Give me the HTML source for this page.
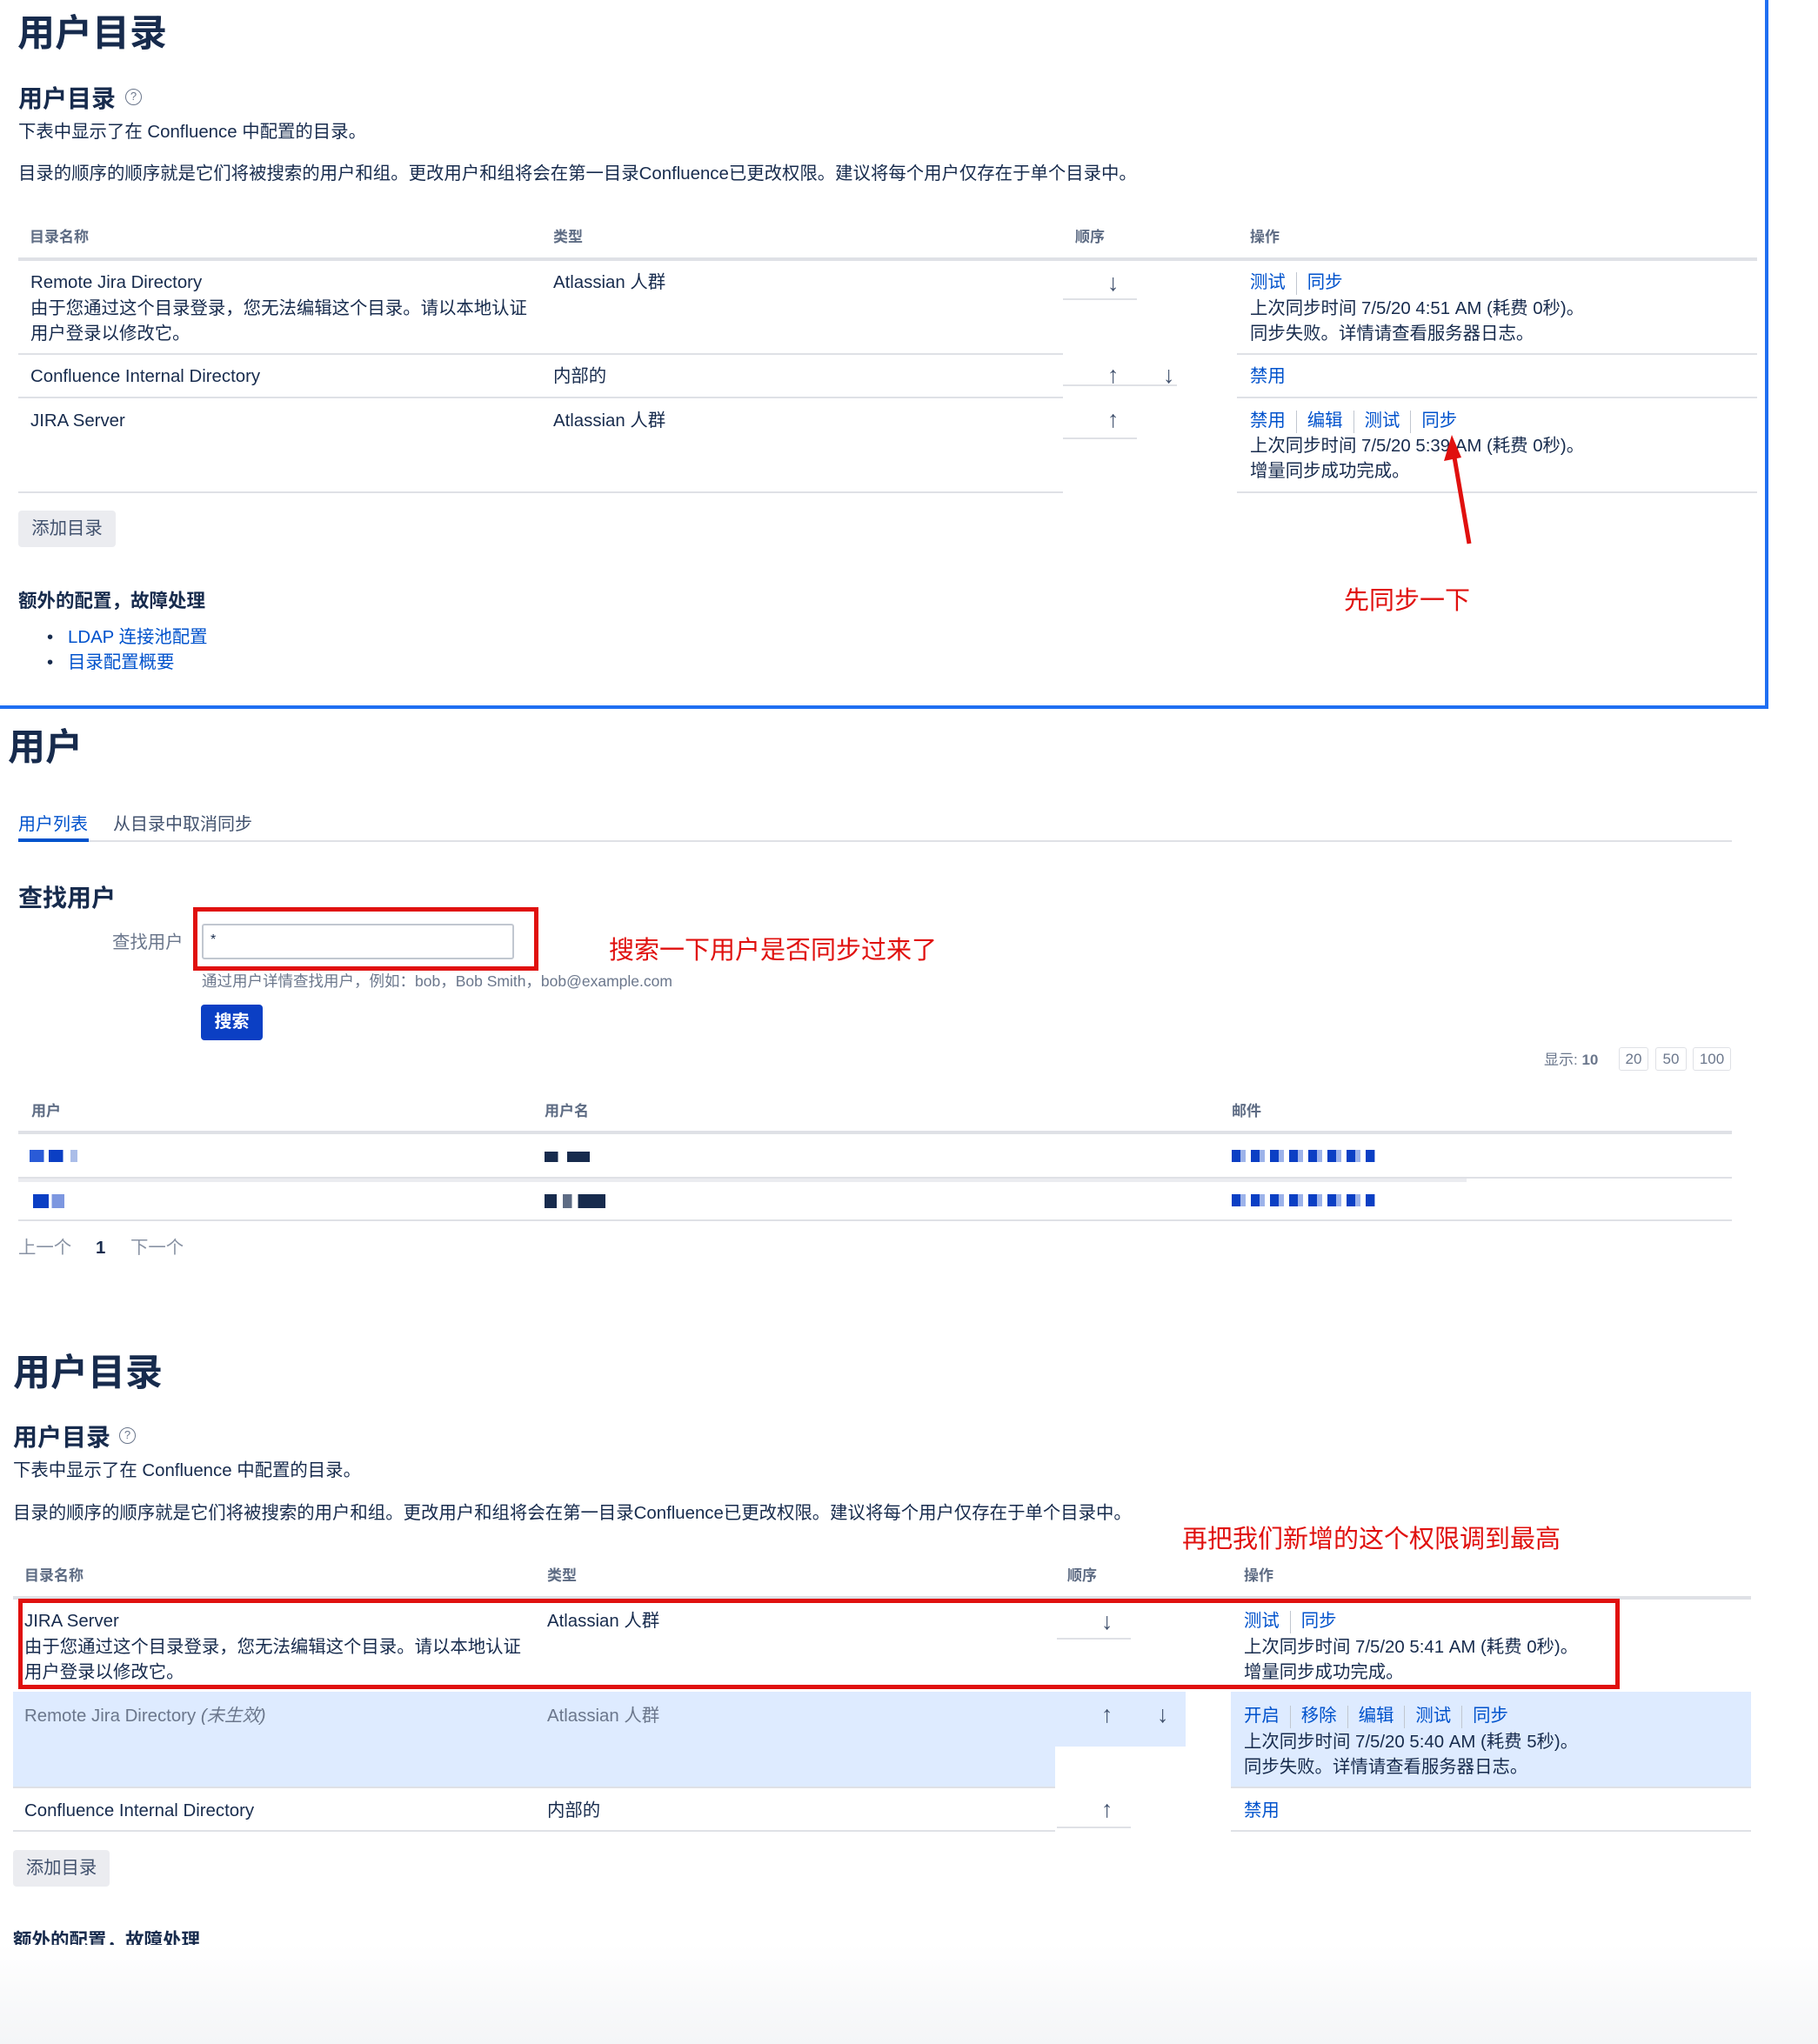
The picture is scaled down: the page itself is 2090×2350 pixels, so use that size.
<!DOCTYPE html>
<html><head><meta charset="utf-8"><style>
*{margin:0;padding:0;box-sizing:border-box}
body{width:2090px;height:2350px;position:relative;overflow:hidden;background:#fff;font-family:"Liberation Sans","Noto Sans CJK SC",sans-serif;color:#172b4d}
.t{position:absolute;white-space:nowrap;font-size:20.4px;line-height:30px;transform:translateY(2px)}
.h1{font-size:43px;font-weight:bold;line-height:60px}
.h2{font-size:28px;font-weight:bold;line-height:40px}
.th{font-size:17px;font-weight:bold;color:#5e6c84}
.a{color:#0052cc}
.g{color:#6b778c}
.red{color:#e0100e;font-size:29px;line-height:40px}
.l{position:absolute;background:#dfe1e6;height:2px}
.lt{position:absolute;background:#dfe1e6;height:4px}
.sep{display:inline-block;width:1px;height:26px;background:#c1c7d0;vertical-align:middle;margin:0 12px}
.btn{position:absolute;background:#ebecf0;border-radius:4px;font-size:20.4px;line-height:42px;text-align:center;color:#42526e}
.arr{position:absolute;font-size:27px;line-height:30px;color:#42526e;font-weight:bold;transform:translateY(2px)}
.q{position:absolute;width:19px;height:19px;border:1.5px solid #6b778c;border-radius:50%;font-size:13px;line-height:16px;text-align:center;color:#6b778c}
.rb{position:absolute;border:5px solid #e0100e}
.blk{position:absolute}
</style></head><body>

<!-- Section 1 -->
<div class="t h1" style="left:20px;top:7px">用户目录</div>
<div class="t h2" style="left:21px;top:92px">用户目录</div>
<div class="q" style="left:144px;top:102px">?</div>
<div class="t" style="left:21px;top:135px">下表中显示了在 Confluence 中配置的目录。</div>
<div class="t" style="left:21px;top:183px">目录的顺序的顺序就是它们将被搜索的用户和组。更改用户和组将会在第一目录Confluence已更改权限。建议将每个用户仅存在于单个目录中。</div>

<div class="t th" style="left:34px;top:256px">目录名称</div>
<div class="t th" style="left:636px;top:256px">类型</div>
<div class="t th" style="left:1236px;top:256px">顺序</div>
<div class="t th" style="left:1437px;top:256px">操作</div>
<div class="lt" style="left:21px;top:296px;width:1999px"></div>

<div class="t" style="left:35px;top:308px">Remote Jira Directory</div>
<div class="t" style="left:35px;top:338px">由于您通过这个目录登录，您无法编辑这个目录。请以本地认证</div>
<div class="t" style="left:35px;top:367px">用户登录以修改它。</div>
<div class="t" style="left:636px;top:308px">Atlassian 人群</div>
<div class="arr" style="left:1273px;top:308px">↓</div>
<div class="l" style="left:1222px;top:343px;width:85px"></div>
<div class="t a" style="left:1437px;top:308px">测试<span class="sep"></span>同步</div>
<div class="t" style="left:1437px;top:338px">上次同步时间 7/5/20 4:51 AM (耗费 0秒)。</div>
<div class="t" style="left:1437px;top:367px">同步失败。详情请查看服务器日志。</div>
<div class="l" style="left:21px;top:406px;width:1201px"></div>
<div class="l" style="left:1422px;top:406px;width:598px"></div>

<div class="t" style="left:35px;top:416px">Confluence Internal Directory</div>
<div class="t" style="left:636px;top:416px">内部的</div>
<div class="arr" style="left:1273px;top:414px">↑</div>
<div class="arr" style="left:1337px;top:414px">↓</div>
<div class="l" style="left:1222px;top:442px;width:131px"></div>
<div class="t a" style="left:1437px;top:416px">禁用</div>
<div class="l" style="left:21px;top:456px;width:1201px"></div>
<div class="l" style="left:1422px;top:456px;width:598px"></div>

<div class="t" style="left:35px;top:467px">JIRA Server</div>
<div class="t" style="left:636px;top:467px">Atlassian 人群</div>
<div class="arr" style="left:1273px;top:465px">↑</div>
<div class="l" style="left:1222px;top:503px;width:85px"></div>
<div class="t a" style="left:1437px;top:467px">禁用<span class="sep"></span>编辑<span class="sep"></span>测试<span class="sep"></span>同步</div>
<div class="t" style="left:1437px;top:496px">上次同步时间 7/5/20 5:39 AM (耗费 0秒)。</div>
<div class="t" style="left:1437px;top:525px">增量同步成功完成。</div>
<div class="l" style="left:21px;top:565px;width:1201px"></div>
<div class="l" style="left:1422px;top:565px;width:598px"></div>

<svg class="blk" style="left:1650px;top:490px" width="60" height="140"><line x1="39" y1="135" x2="21" y2="30" stroke="#e0100e" stroke-width="5"/><polygon points="19,10 10,40 30,36" fill="#e0100e"/></svg>

<div class="btn" style="left:21px;top:587px;width:112px">添加目录</div>
<div class="t red" style="left:1545px;top:669px">先同步一下</div>
<div class="t" style="left:21px;top:674px;font-weight:bold;font-size:21.5px">额外的配置，故障处理</div>
<div class="t" style="left:54px;top:716px">•</div>
<div class="t a" style="left:78px;top:716px">LDAP 连接池配置</div>
<div class="t" style="left:54px;top:745px">•</div>
<div class="t a" style="left:78px;top:745px">目录配置概要</div>

<div class="blk" style="left:2029px;top:0;width:4px;height:815px;background:#1f6ff2"></div>
<div class="blk" style="left:0;top:811px;width:2033px;height:4px;background:#1f6ff2"></div>

<!-- Section 2 -->
<div class="t h1" style="left:9px;top:828px">用户</div>
<div class="t a" style="left:21px;top:931px;font-size:20px">用户列表</div>
<div class="t" style="left:130px;top:931px;font-size:20px;color:#42526e">从目录中取消同步</div>
<div class="l" style="left:21px;top:966px;width:1970px"></div>
<div class="blk" style="left:21px;top:964px;width:81px;height:4px;background:#0052cc"></div>

<div class="t h2" style="left:21px;top:1011px;font-size:28px">查找用户</div>
<div class="t g" style="left:129px;top:1067px">查找用户</div>
<div class="blk" style="left:232px;top:1062px;width:359px;height:41px;border:2px solid #c1c7d0;border-radius:3px;font-size:16px;padding:8px 8px">*</div>
<div class="rb" style="left:222px;top:1043px;width:397px;height:73px"></div>
<div class="t red" style="left:700px;top:1071px">搜索一下用户是否同步过来了</div>
<div class="t g" style="left:232px;top:1111px;font-size:17.5px">通过用户详情查找用户，例如：bob，Bob Smith，bob@example.com</div>
<div class="blk" style="left:231px;top:1155px;width:71px;height:41px;background:#0b3fc4;border-radius:4px;color:#fff;font-weight:bold;font-size:20px;line-height:41px;text-align:center">搜索</div>

<div class="t g" style="left:1775px;top:1202px;font-size:17px">显示: <b style="color:#6b778c">10</b></div>
<div class="blk g" style="left:1861px;top:1204px;width:34px;height:27px;border:1px solid #dfe1e6;border-radius:3px;font-size:17px;line-height:25px;text-align:center">20</div>
<div class="blk g" style="left:1903px;top:1204px;width:36px;height:27px;border:1px solid #dfe1e6;border-radius:3px;font-size:17px;line-height:25px;text-align:center">50</div>
<div class="blk g" style="left:1946px;top:1204px;width:44px;height:27px;border:1px solid #dfe1e6;border-radius:3px;font-size:17px;line-height:25px;text-align:center">100</div>

<div class="t th" style="left:36px;top:1261px">用户</div>
<div class="t th" style="left:626px;top:1261px">用户名</div>
<div class="t th" style="left:1416px;top:1261px">邮件</div>
<div class="lt" style="left:21px;top:1300px;width:1970px"></div>
<div class="blk" style="left:34px;top:1322px;width:55px;height:14px;background:linear-gradient(90deg,#2a5bd7 0 30%,#fff 30% 40%,#0b3fc4 40% 70%,#fff 70% 85%,#aabde8 85%)"></div>
<div class="blk" style="left:626px;top:1324px;width:52px;height:12px;background:linear-gradient(90deg,#172b4d 0 30%,#fff 30% 50%,#172b4d 50%)"></div>
<div class="blk" style="left:1416px;top:1322px;width:165px;height:14px;background:repeating-linear-gradient(90deg,#0b3fc4 0 10px,#9db3ea 10px 16px,#fff 16px 22px)"></div>
<div class="l" style="left:21px;top:1353px;width:1970px"></div>
<div class="blk" style="left:21px;top:1355px;width:1665px;height:4px;background:#ebecf0"></div>
<div class="blk" style="left:38px;top:1373px;width:36px;height:16px;background:linear-gradient(90deg,#0b3fc4 0 50%,#fff 50% 60%,#7d97e0 60%)"></div>
<div class="blk" style="left:626px;top:1373px;width:70px;height:16px;background:linear-gradient(90deg,#172b4d 0 20%,#fff 20% 30%,#5e6c84 30% 45%,#fff 45% 55%,#172b4d 55%)"></div>
<div class="blk" style="left:1416px;top:1373px;width:165px;height:14px;background:repeating-linear-gradient(90deg,#0b3fc4 0 10px,#9db3ea 10px 16px,#fff 16px 22px)"></div>
<div class="l" style="left:21px;top:1402px;width:1970px"></div>

<div class="t" style="left:21px;top:1418px;color:#8993a4">上一个</div>
<div class="t" style="left:110px;top:1418px;font-weight:bold">1</div>
<div class="t" style="left:150px;top:1418px;color:#8993a4">下一个</div>

<!-- Section 3 -->
<div class="t h1" style="left:15px;top:1547px">用户目录</div>
<div class="t h2" style="left:15px;top:1631px">用户目录</div>
<div class="q" style="left:137px;top:1641px">?</div>
<div class="t" style="left:15px;top:1674px">下表中显示了在 Confluence 中配置的目录。</div>
<div class="t" style="left:15px;top:1723px">目录的顺序的顺序就是它们将被搜索的用户和组。更改用户和组将会在第一目录Confluence已更改权限。建议将每个用户仅存在于单个目录中。</div>
<div class="t red" style="left:1359px;top:1748px">再把我们新增的这个权限调到最高</div>

<div class="t th" style="left:28px;top:1795px">目录名称</div>
<div class="t th" style="left:629px;top:1795px">类型</div>
<div class="t th" style="left:1227px;top:1795px">顺序</div>
<div class="t th" style="left:1430px;top:1795px">操作</div>
<div class="lt" style="left:15px;top:1835px;width:1998px"></div>

<div class="t" style="left:28px;top:1847px">JIRA Server</div>
<div class="t" style="left:28px;top:1877px">由于您通过这个目录登录，您无法编辑这个目录。请以本地认证</div>
<div class="t" style="left:28px;top:1906px">用户登录以修改它。</div>
<div class="t" style="left:629px;top:1847px">Atlassian 人群</div>
<div class="arr" style="left:1266px;top:1847px">↓</div>
<div class="l" style="left:1215px;top:1883px;width:85px"></div>
<div class="t a" style="left:1430px;top:1847px">测试<span class="sep"></span>同步</div>
<div class="t" style="left:1430px;top:1877px">上次同步时间 7/5/20 5:41 AM (耗费 0秒)。</div>
<div class="t" style="left:1430px;top:1906px">增量同步成功完成。</div>
<div class="rb" style="left:21px;top:1838px;width:1841px;height:104px"></div>

<div class="blk" style="left:15px;top:1945px;width:1348px;height:63px;background:#deebff"></div>
<div class="blk" style="left:15px;top:1945px;width:1198px;height:109px;background:#deebff"></div>
<div class="blk" style="left:1415px;top:1945px;width:598px;height:109px;background:#deebff"></div>
<div class="blk" style="left:1363px;top:1945px;width:52px;height:63px;background:#fff"></div>
<div class="t g" style="left:28px;top:1956px">Remote Jira Directory <i>(未生效)</i></div>
<div class="t g" style="left:629px;top:1956px">Atlassian 人群</div>
<div class="arr" style="left:1266px;top:1954px">↑</div>
<div class="arr" style="left:1330px;top:1954px">↓</div>
<div class="t a" style="left:1430px;top:1956px">开启<span class="sep"></span>移除<span class="sep"></span>编辑<span class="sep"></span>测试<span class="sep"></span>同步</div>
<div class="t" style="left:1430px;top:1986px">上次同步时间 7/5/20 5:40 AM (耗费 5秒)。</div>
<div class="t" style="left:1430px;top:2015px">同步失败。详情请查看服务器日志。</div>
<div class="l" style="left:15px;top:2054px;width:1198px"></div>
<div class="l" style="left:1415px;top:2054px;width:598px"></div>

<div class="t" style="left:28px;top:2065px">Confluence Internal Directory</div>
<div class="t" style="left:629px;top:2065px">内部的</div>
<div class="arr" style="left:1266px;top:2063px">↑</div>
<div class="l" style="left:1215px;top:2100px;width:85px"></div>
<div class="t a" style="left:1430px;top:2065px">禁用</div>
<div class="l" style="left:15px;top:2104px;width:1198px"></div>
<div class="l" style="left:1415px;top:2104px;width:598px"></div>

<div class="btn" style="left:15px;top:2127px;width:111px">添加目录</div>
<div class="blk" style="left:0;top:2212px;width:400px;height:24px;overflow:hidden"><div class="t" style="left:15px;top:2px;font-weight:bold;font-size:21.5px">额外的配置，故障处理</div></div>
<div class="blk" style="left:0;top:2236px;width:2090px;height:114px;background:linear-gradient(#fff,#f4f5f7)"></div>
</body></html>
